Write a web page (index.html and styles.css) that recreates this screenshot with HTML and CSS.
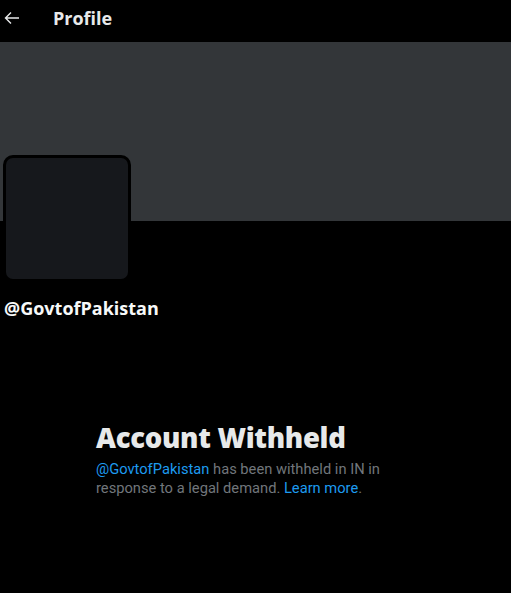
FILE: index.html
```html
<!DOCTYPE html>
<html>
<head>
<meta charset="utf-8">
<link rel="stylesheet" href="styles.css">
</head>
<body>
<header class="topbar">
  <svg class="back" width="16" height="14" viewBox="0 0 16 14"><path d="M7 1.5 L1.5 7 L7 12.5 M1.5 7 H15" fill="none" stroke="#e7e9ea" stroke-width="1.4"/></svg>
  <h1 class="title">Profile</h1>
</header>
<div class="banner"></div>
<div class="avatar"></div>
<div class="handle">@GovtofPakistan</div>
<section class="withheld">
  <h2 class="wh-title">Account Withheld</h2>
  <p class="wh-text"><span class="link">@GovtofPakistan</span> has been withheld in IN in response to a legal demand. <span class="link">Learn more</span>.</p>
</section>
</body>
</html>
```
FILE: styles.css
```css
html, body { margin: 0; padding: 0; background: #000; }
body { font-family: "Open Sans", "Noto Sans", sans-serif; color: #e7e9ea; width: 511px; height: 593px; overflow: hidden; }
.topbar { height: 42px; display: flex; align-items: center; padding-left: 4px; }
.back { display: block; margin-top: -7px; }
.title { margin: -6px 0 0 33px; font-size: 18px; font-weight: 700; line-height: 24px; }
.banner { height: 179px; background: #333639; }
.avatar { margin: -66px 0 0 3px; width: 122px; height: 121px; border: 3px solid #000; border-radius: 10px; background: #16181c; }
.handle { margin: 14px 0 0 4px; font-size: 18px; font-weight: 700; line-height: 24px; color: #f7f9f9; }
.withheld { margin: 99px 0 0 96px; width: 310px; }
.wh-title { margin: 0; font-size: 27.5px; font-weight: 800; line-height: 37px; letter-spacing: -0.3px; }
.wh-text { margin: 4px 0 0; font-family: Roboto, "Open Sans", sans-serif; font-size: 14.7px; line-height: 19px; color: #71767b; }
.link { color: #1d9bf0; }
```
